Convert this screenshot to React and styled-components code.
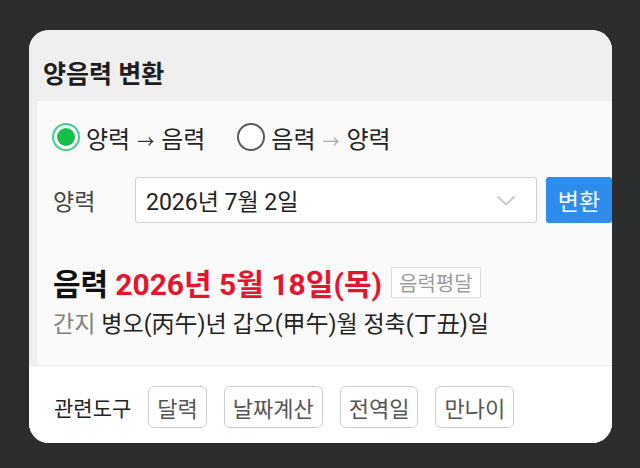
import React, { useState } from 'react';
import styled, { createGlobalStyle } from 'styled-components';

const GlobalStyle = createGlobalStyle`
  html, body {
    margin: 0;
    padding: 0;
    background: #2c2d2f;
    font-family: Roboto, "Noto Sans CJK KR", sans-serif;
  }
  #root {
    height: 468px;
    overflow: hidden;
  }
`;

const Card = styled.div`
  margin: 30px 0 0 29px;
  width: 583px;
  height: 413px;
  background: #fff;
  border-radius: 20px;
  overflow: hidden;
  display: flex;
  flex-direction: column;
`;

const Header = styled.div`
  height: 71px;
  box-sizing: border-box;
  padding: 13px 0 0 14px;
  display: flex;
  align-items: center;
  background: #efefef;
  font-size: 25px;
  font-weight: 700;
  color: #1e1e1e;
`;

const Body = styled.div`
  background: #efefef;
  padding-left: 8px;
`;

const Panel = styled.div`
  background: #fafafa;
  padding: 14px 0 29px 15px;
  display: flex;
  flex-direction: column;
`;

const RadioRow = styled.div`
  height: 44px;
  display: flex;
  align-items: center;
  gap: 32px;
`;

const RadioOption = styled.label`
  display: flex;
  align-items: center;
  gap: 6px;
  font-size: 24px;
  color: #222;
  cursor: pointer;
`;

const RadioDot = styled.span`
  width: 28px;
  height: 28px;
  box-sizing: border-box;
  border-radius: 50%;
  border: 2px solid ${p => (p.$on ? '#3fd08c' : '#5a5a5a')};
  background: #fff;
  display: flex;
  align-items: center;
  justify-content: center;
  &::after {
    content: '';
    width: 18px;
    height: 18px;
    border-radius: 50%;
    background: ${p => (p.$on ? '#15c04a' : 'transparent')};
  }
`;

const Arrow = styled.span`
  font-size: 17px;
  margin: 0 7px;
  color: ${p => (p.$dim ? '#aaa' : '#333')};
`;

const InputRow = styled.div`
  margin-top: 18px;
  display: flex;
  align-items: center;
`;

const FieldLabel = styled.span`
  width: 83px;
  padding-left: 1px;
  box-sizing: border-box;
  font-size: 23px;
  color: #444;
`;

const DateSelect = styled.div`
  width: 402px;
  height: 46px;
  box-sizing: border-box;
  border: 1px solid #cfcfcf;
  border-radius: 3px;
  background: #fff;
  display: flex;
  align-items: center;
  justify-content: space-between;
  padding: 0 20px 0 10px;
  font-size: 23px;
  color: #222;
`;

const ConvertButton = styled.button`
  margin-left: 9px;
  width: 66px;
  height: 46px;
  border: 0;
  border-radius: 3px;
  background: #2e8cec;
  color: #fff;
  font-family: inherit;
  font-size: 23px;
  padding: 0;
`;

const ResultRow = styled.div`
  margin-top: 42px;
  height: 34px;
  display: flex;
  align-items: center;
  padding-left: 1px;
  font-size: 30px;
  font-weight: 700;
  color: #111;
`;

const LunarDate = styled.span`
  margin-left: 7px;
  color: #e3162e;
`;

const Badge = styled.span`
  margin-left: 9px;
  height: 31px;
  box-sizing: border-box;
  padding: 0 7px;
  border: 1px solid #dcdcdc;
  background: #fff;
  display: flex;
  align-items: center;
  font-size: 20px;
  font-weight: 400;
  color: #9a9a9a;
`;

const GanjiRow = styled.div`
  margin-top: 9px;
  height: 28px;
  display: flex;
  align-items: center;
  padding-left: 1px;
  font-size: 23px;
  color: #222;
`;

const GanjiLabel = styled.span`
  color: #808080;
  margin-right: 6px;
`;

const Footer = styled.div`
  flex: 1;
  border-top: 1px solid #ececec;
  background: #fff;
  display: flex;
  align-items: center;
  padding: 5px 0 0 25px;
  gap: 17px;
`;

const FooterLabel = styled.span`
  font-size: 21px;
  color: #222;
`;

const ToolButton = styled.button`
  height: 42px;
  padding: 0 8px;
  border: 1px solid #cdcdcd;
  border-radius: 6px;
  background: #fff;
  font-family: inherit;
  font-size: 22px;
  color: #555;
`;

const Chevron = () => (
  <svg width="20" height="11" viewBox="0 0 20 11" fill="none">
    <path d="M1.5 1.5 L10 9.5 L18.5 1.5" stroke="#c8c8c8" strokeWidth="2" />
  </svg>
);

export default function App() {
  const [mode, setMode] = useState('solar');

  return (
    <>
      <GlobalStyle />
      <Card>
        <Header>양음력 변환</Header>
        <Body>
          <Panel>
            <RadioRow>
              <RadioOption onClick={() => setMode('solar')}>
                <RadioDot $on={mode === 'solar'} />
                <span>양력<Arrow>→</Arrow>음력</span>
              </RadioOption>
              <RadioOption onClick={() => setMode('lunar')}>
                <RadioDot $on={mode === 'lunar'} />
                <span>음력<Arrow $dim>→</Arrow>양력</span>
              </RadioOption>
            </RadioRow>

            <InputRow>
              <FieldLabel>양력</FieldLabel>
              <DateSelect>
                <span>2026년 7월 2일</span>
                <Chevron />
              </DateSelect>
              <ConvertButton>변환</ConvertButton>
            </InputRow>

            <ResultRow>
              음력
              <LunarDate>2026년 5월 18일(목)</LunarDate>
              <Badge>음력평달</Badge>
            </ResultRow>

            <GanjiRow>
              <GanjiLabel>간지</GanjiLabel>
              병오(丙午)년 갑오(甲午)월 정축(丁丑)일
            </GanjiRow>
          </Panel>
        </Body>
        <Footer>
          <FooterLabel>관련도구</FooterLabel>
          <ToolButton>달력</ToolButton>
          <ToolButton>날짜계산</ToolButton>
          <ToolButton>전역일</ToolButton>
          <ToolButton>만나이</ToolButton>
        </Footer>
      </Card>
    </>
  );
}
